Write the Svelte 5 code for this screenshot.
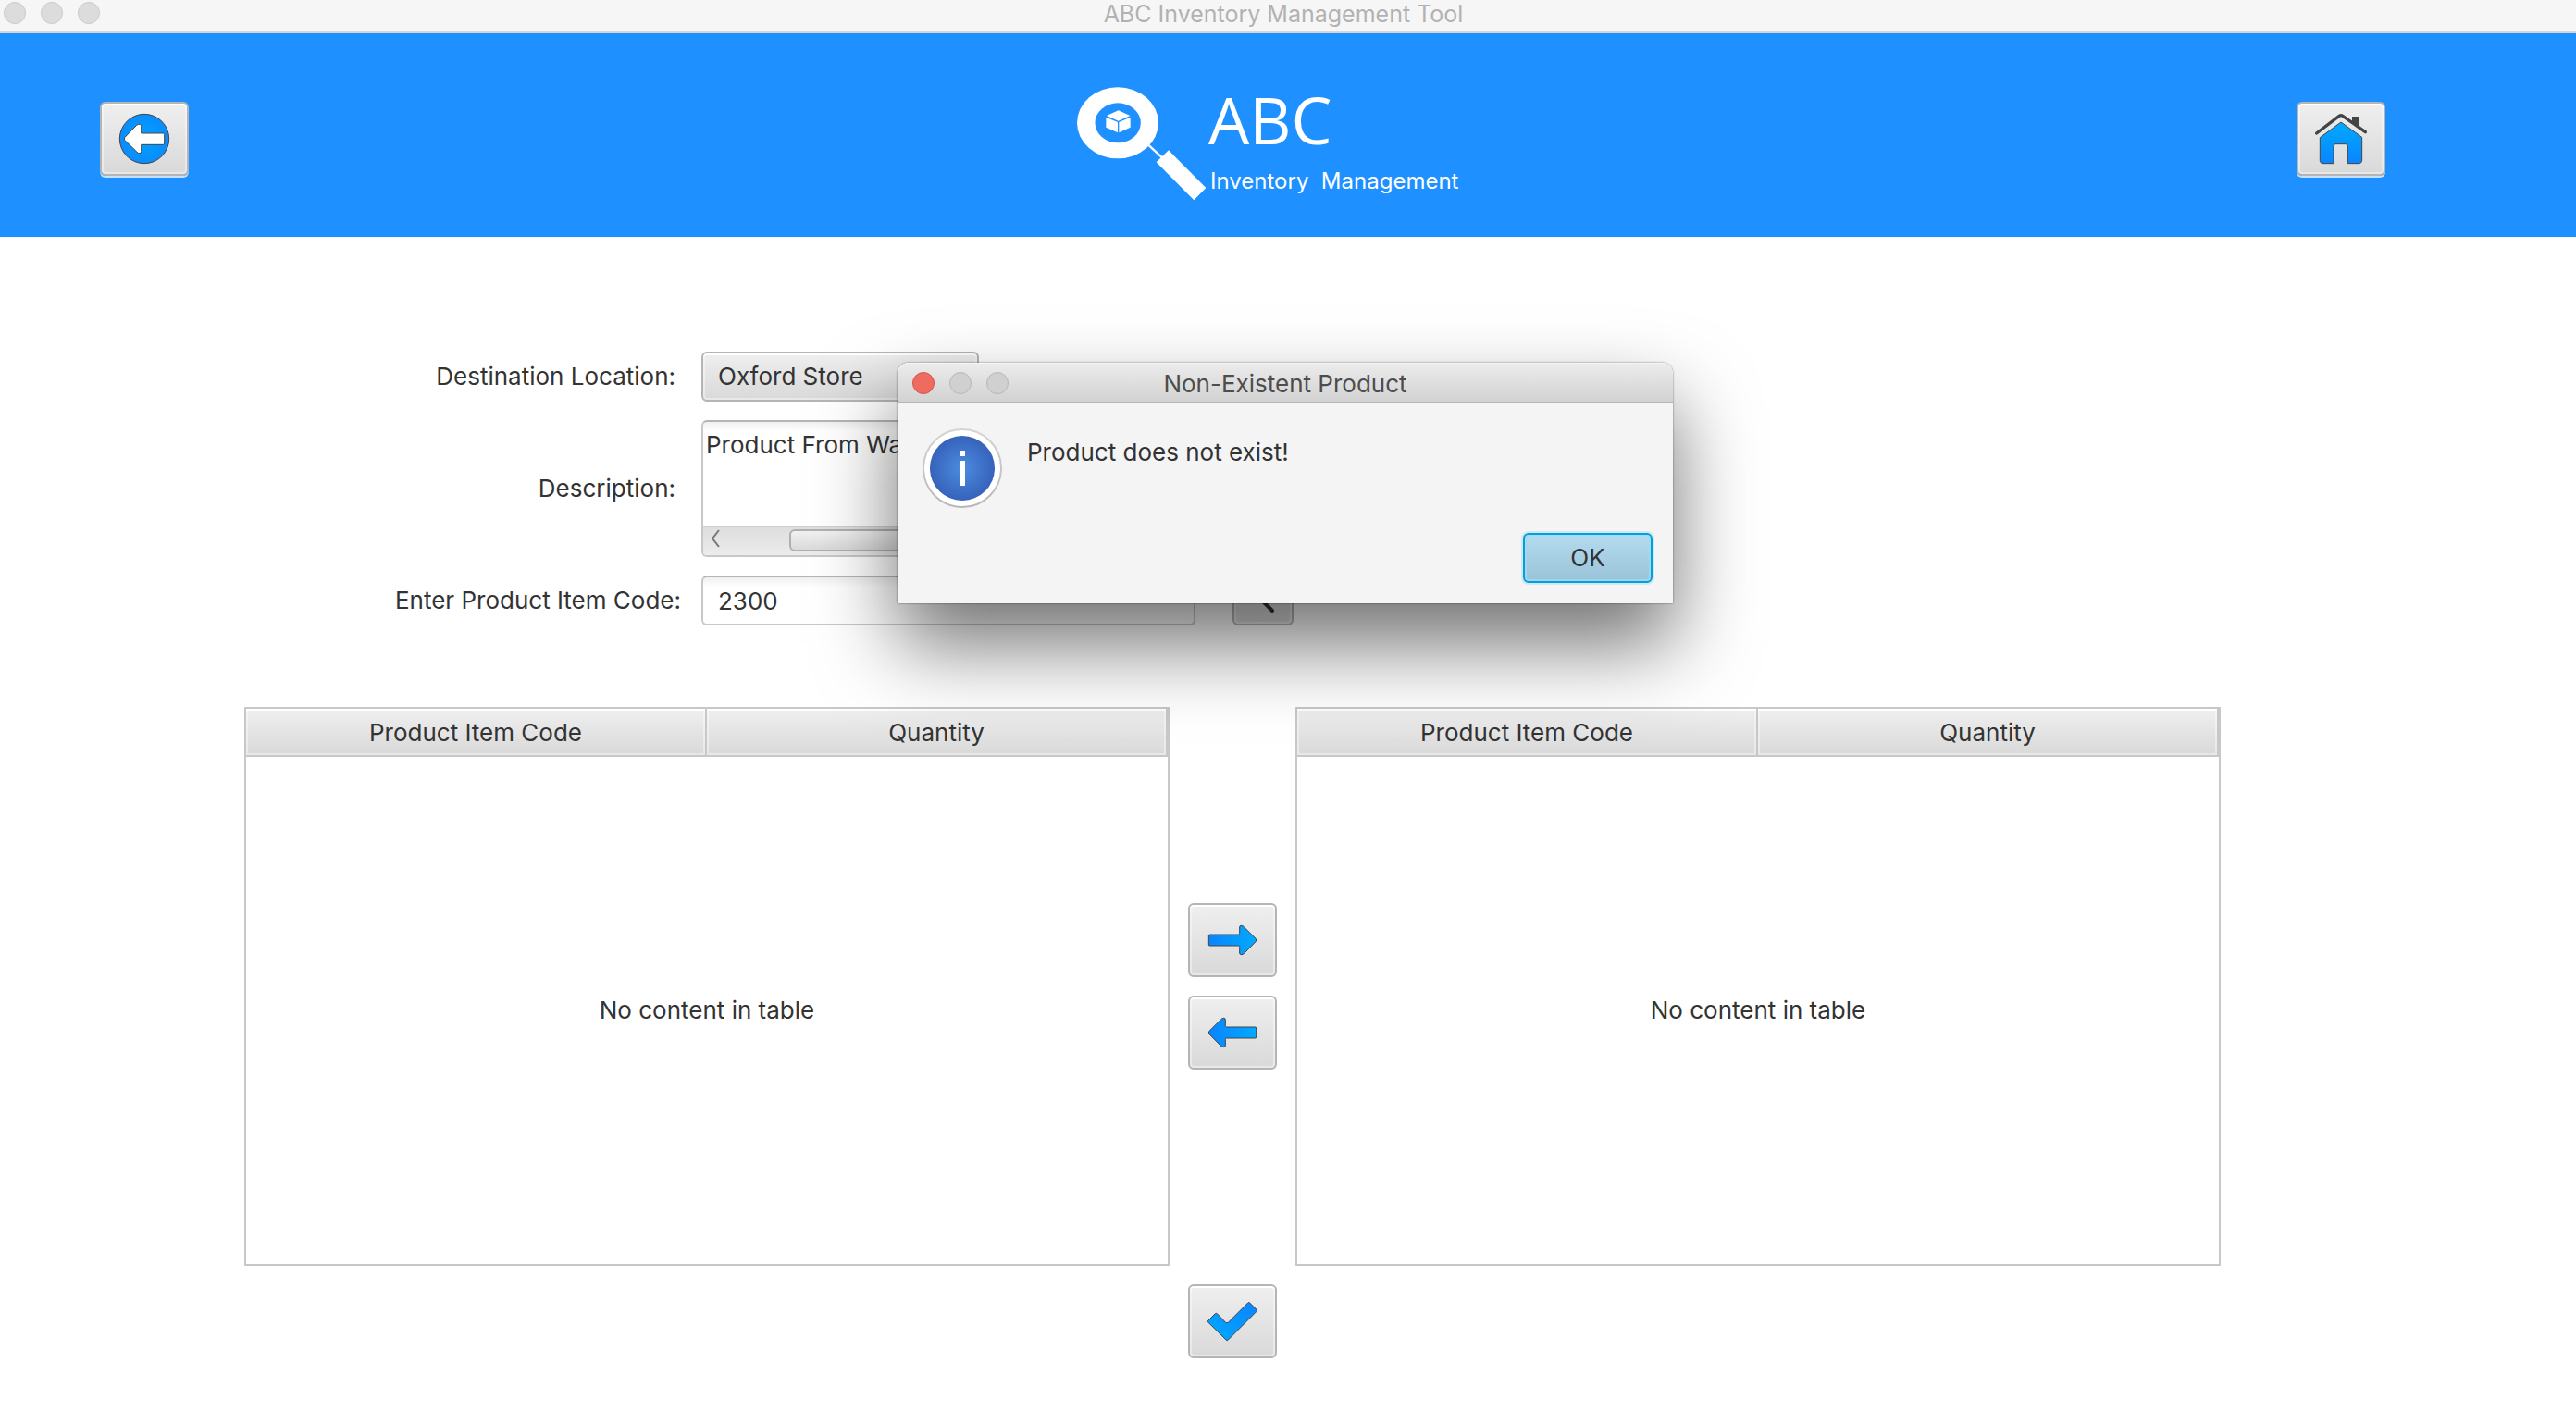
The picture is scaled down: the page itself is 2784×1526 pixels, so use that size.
<script>
  let location = $state('Oxford Store');
  let description = $state('Product From Warehouse');
  let itemCode = $state('2300');
  const tables = ['source', 'selected'];
</script>

{#snippet productTable(name)}
  <table aria-label="{name} products">
    <thead>
      <tr><th scope="col">Product Item Code</th><th scope="col">Quantity</th></tr>
    </thead>
    <tbody>
      <tr><td colspan="2">No content in table</td></tr>
    </tbody>
  </table>
{/snippet}

<div class="window">
  <div class="titlebar">
    <div class="lights"><span></span><span></span><span></span></div>
    <div class="title">ABC Inventory Management Tool</div>
  </div>

  <header>
    <button class="tool on-blue" aria-label="Back">
      <svg width="60" height="60" viewBox="378 360 180 180">
        <defs>
          <radialGradient id="disc"><stop offset="0" stop-color="#00a2ff" /><stop offset="1" stop-color="#0a8cff" /></radialGradient>
        </defs>
        <circle cx="468" cy="450" r="80" fill="url(#disc)" stroke="#444" stroke-width="3" />
        <path d="M404 446 L443 406 Q448 402 454 403 Q458 404 458 409 V432 H529 Q533 432 533 436 V465 Q533 469 529 469 H458 V491 Q458 496 453 497 Q448 497 444 493 L404 454 Q402 450 404 446Z" fill="#fff" stroke="#444" stroke-width="3" />
      </svg>
    </button>

    <div class="logo">
      <svg width="140" height="123" viewBox="72 281 420 369">
        <ellipse cx="204" cy="397.500" rx="132" ry="115.500" fill="#fff" />
        <ellipse cx="204.500" cy="397.500" rx="74" ry="64.500" fill="#1e90ff" />
        <path d="M206 357 L244 374 L206 391 L168 374Z M166 379 L204 395 V429 L166 412Z M208 395 L245 379 V412 L208 429Z" fill="#fff" />
        <path d="M300 466 L348 510" stroke="#fff" stroke-width="7" />
        <path d="M369 486 L490 608 L451 648 L329 525Z" fill="#fff" />
      </svg>
      <div class="wordmark">
        <div class="abc">ABC</div>
        <div class="sub">Inventory&nbsp; Management</div>
      </div>
    </div>

    <button class="tool on-blue" aria-label="Home">
      <svg width="60" height="60" viewBox="180 120 180 180">
        <defs>
          <linearGradient id="house" x1="0" y1="0" x2="0" y2="1"><stop offset="0" stop-color="#00aaff" /><stop offset="1" stop-color="#0a84ff" /></linearGradient>
        </defs>
        <path d="M306 138 H327 V172 L306 158Z" fill="#444" />
        <path d="M191 192 L264 136 Q270 132 276 136 L349 188" fill="none" stroke="#444" stroke-width="10" stroke-linecap="round" />
        <path d="M270 156 L338 205 V281 Q337 289 329 290 H292 V234 Q291 228 285 227 H252 Q247 228 246 234 V290 H210 Q203 289 202 281 V206Z" fill="url(#house)" stroke="#444" stroke-width="3" />
      </svg>
    </button>
  </header>

  <main>
    <form onsubmit={(e) => e.preventDefault()}>
      <label for="location">Destination Location:</label>
      <select id="location" bind:value={location}>
        <option>Oxford Store</option>
      </select>

      <label for="description">Description:</label>
      <div class="area">
        <textarea id="description" wrap="off" bind:value={description}></textarea>
        <div class="scrollbar">
          <svg width="10" height="20" viewBox="0 0 10 20"><path d="M9 1 L2 10 L9 19" fill="none" stroke="#777" stroke-width="2" /></svg>
          <div class="thumb"></div>
        </div>
      </div>

      <label class="wide" for="code">Enter Product Item Code:</label>
      <div class="search">
        <input id="code" type="text" bind:value={itemCode} />
        <button class="find" aria-label="Search">
          <svg width="28" height="28" viewBox="0 0 28 28"><circle cx="9" cy="8" r="6" fill="#0a96ff" stroke="#444" stroke-width="3" /><path d="M14 15 L24 25" stroke="#333" stroke-width="4" stroke-linecap="round" /></svg>
        </button>
      </div>
    </form>

    <section class="transfer">
      {@render productTable(tables[0])}
      <div class="moves">
        <button class="tool" aria-label="Add to list">
          <svg width="60" height="60" viewBox="246 738 180 180">
            <defs>
              <linearGradient id="toRight"><stop offset="0" stop-color="#0a84ff" /><stop offset="1" stop-color="#00aaff" /></linearGradient>
            </defs>
            <path d="M262 810 H355 Q359 810 359 806 V786 Q359 781 364 781 Q369 781 373 785 L411 823 Q415 828 411 833 L374 871 Q370 875 365 875 Q359 875 359 870 V850 Q359 846 355 846 H262 Q259 846 259 843 V813 Q259 810 262 810Z" fill="url(#toRight)" stroke="#444" stroke-width="3" />
          </svg>
        </button>
        <button class="tool" aria-label="Remove from list">
          <svg width="60" height="60" viewBox="246 1038 180 180">
            <defs>
              <linearGradient id="toLeft"><stop offset="0" stop-color="#0a84ff" /><stop offset="1" stop-color="#00aaff" /></linearGradient>
            </defs>
            <path d="M410 1110 H317 Q313 1110 313 1106 V1086 Q313 1081 308 1081 Q303 1081 299 1085 L261 1123 Q257 1128 261 1133 L298 1171 Q302 1175 307 1175 Q313 1175 313 1170 V1150 Q313 1146 317 1146 H410 Q413 1146 413 1143 V1113 Q413 1110 410 1110Z" fill="url(#toLeft)" stroke="#444" stroke-width="3" />
          </svg>
        </button>
      </div>
      {@render productTable(tables[1])}
    </section>

    <div class="confirm">
      <button class="tool" aria-label="Confirm">
        <svg width="60" height="60" viewBox="186 174 180 180">
          <defs>
            <linearGradient id="tick" x1="0" y1="1" x2="1" y2="0"><stop offset="0" stop-color="#00aaff" /><stop offset="1" stop-color="#0a84ff" /></linearGradient>
          </defs>
          <path d="M196 266 Q195 264 197 262 L220 239 Q223 237 226 239 L254 268 Q258 271 262 268 L326 204 Q329 201 332 204 L354 226 Q357 229 354 232 L262 324 Q258 328 255 324Z" fill="url(#tick)" stroke="#444" stroke-width="3" />
        </svg>
      </button>
    </div>
  </main>

  <div class="dialog" role="dialog" aria-labelledby="dialog-title" aria-describedby="dialog-text">
    <div class="dialog-bar">
      <div class="lights"><span class="close"></span><span></span><span></span></div>
      <div class="title" id="dialog-title">Non-Existent Product</div>
    </div>
    <div class="dialog-body">
      <svg width="86" height="86" viewBox="0 0 86 86">
        <defs>
          <radialGradient id="info"><stop offset="0" stop-color="#4a8ddf" /><stop offset="1" stop-color="#3762bb" /></radialGradient>
          <linearGradient id="rim" x1="0" y1="0" x2="0" y2="1"><stop offset="0" stop-color="#d4d4d4" /><stop offset="1" stop-color="#b8b8b8" /></linearGradient>
        </defs>
        <circle cx="43" cy="43" r="42" fill="#fff" stroke="url(#rim)" stroke-width="2" />
        <circle cx="43" cy="43" r="35" fill="url(#info)" />
        <path d="M40 24 H46 V30 H40Z M40 35 H46 V62 H40Z" fill="#fff" />
      </svg>
      <p id="dialog-text">Product does not exist!</p>
    </div>
    <div class="dialog-actions"><button class="ok">OK</button></div>
  </div>
</div>

<style>
  :global(body) {
    margin: 0;
    background: #fff;
  }
  .window {
    position: relative;
    min-height: 100vh;
    overflow: hidden;
    font-family: Inter, 'Liberation Sans', sans-serif;
    font-size: 26px;
    line-height: 32px;
    color: #333;
  }
  button,
  input,
  select,
  textarea {
    box-sizing: border-box;
    margin: 0;
    font: inherit;
    color: inherit;
  }
  svg {
    display: block;
  }

  .titlebar {
    display: grid;
    grid-template-columns: 120px 1fr 130px;
    box-sizing: border-box;
    height: 36px;
    padding-top: 2px;
    background: #f6f6f6;
    border-bottom: 2px solid #d6d6d6;
    color: #b2b2b2;
    font-size: 25px;
  }
  .title {
    line-height: 26px;
    text-align: center;
  }
  .lights {
    display: flex;
    gap: 16px;
    padding-left: 4px;
  }
  .lights span {
    box-sizing: border-box;
    width: 24px;
    height: 24px;
    border: 1px solid #cbcbcb;
    border-radius: 50%;
    background: #dcdcdc;
  }

  header {
    display: flex;
    justify-content: space-between;
    box-sizing: border-box;
    height: 220px;
    padding: 74px 206px 0 108px;
    background: #1e90ff;
  }
  .tool,
  .find {
    display: flex;
    align-items: center;
    justify-content: center;
    width: 96px;
    height: 80px;
    padding: 0;
    border: 2px solid #b5b5b5;
    border-radius: 6px;
    background: linear-gradient(#efefef, #d9d9d9);
    box-shadow:
      inset 0 2px 0 #fff,
      inset 0 0 0 2px rgba(255, 255, 255, 0.4);
  }
  .tool.on-blue {
    box-shadow:
      inset 0 2px 0 #fff,
      inset 0 0 0 2px rgba(255, 255, 255, 0.4),
      0 2px 0 #c4e1ff;
  }
  .logo {
    display: flex;
    align-items: flex-start;
    margin-top: -16px;
    padding-left: 58px;
    color: #fff;
  }
  .wordmark {
    width: 276px;
    white-space: nowrap;
  }
  .abc {
    font-family: 'Open Sans', 'Noto Sans', sans-serif;
    font-size: 70px;
    line-height: 70px;
    padding-left: 2px;
  }
  .sub {
    padding-left: 4px;
    line-height: 64px;
    font-size: 24px;
  }

  main {
    padding: 124px 384px 58px 264px;
  }
  form {
    display: grid;
    grid-template-columns: 494px 534px;
    justify-content: start;
    align-items: center;
    row-gap: 20px;
  }
  label {
    padding-right: 28px;
    text-align: right;
  }
  .wide {
    padding-right: 22px;
  }
  select {
    width: 300px;
    height: 54px;
    padding: 0 16px;
    appearance: none;
    border: 2px solid #b5b5b5;
    border-radius: 6px;
    background: linear-gradient(#efefef, #d9d9d9);
    box-shadow:
      inset 0 2px 0 #fff,
      inset 0 0 0 2px rgba(255, 255, 255, 0.4);
  }
  .area {
    box-sizing: border-box;
    height: 148px;
    border: 2px solid #c8c8c8;
    border-top-color: #b5b5b5;
    border-radius: 6px;
    background: linear-gradient(#f0f0f0, #fff 10px);
    overflow: hidden;
  }
  textarea {
    display: block;
    width: 100%;
    height: 112px;
    padding: 9px 3px;
    border: 0;
    background: none;
    resize: none;
    overflow: hidden;
  }
  .scrollbar {
    display: flex;
    align-items: flex-start;
    box-sizing: border-box;
    height: 32px;
    padding: 2px 0 0 8px;
    border-top: 2px solid #d0d0d0;
    background: linear-gradient(#dedede, #ececec);
  }
  .thumb {
    box-sizing: border-box;
    width: 340px;
    height: 24px;
    margin-left: 75px;
    border: 2px solid #b0b0b0;
    border-radius: 6px;
    background: linear-gradient(#f2f2f2, #dadada);
  }
  .search {
    display: flex;
    gap: 40px;
  }
  input {
    flex: none;
    width: 100%;
    height: 54px;
    padding: 0 16px;
    border: 2px solid #c8c8c8;
    border-top-color: #b5b5b5;
    border-radius: 6px;
    background: linear-gradient(#f0f0f0, #fff 10px);
  }
  .find {
    flex: none;
    width: 66px;
    height: 54px;
  }

  .transfer {
    display: grid;
    grid-template-columns: 1fr 96px 1fr;
    column-gap: 20px;
    margin-top: 88px;
  }
  table {
    width: 100%;
    table-layout: fixed;
    border: 2px solid #c8c8c8;
    border-spacing: 0;
  }
  th {
    height: 48px;
    padding: 2px 0 0;
    border-right: 2px solid #c8c8c8;
    border-bottom: 2px solid #c8c8c8;
    background: linear-gradient(#efefef, #d9d9d9);
    box-shadow:
      inset 0 2px 0 #fff,
      inset 0 0 0 2px rgba(255, 255, 255, 0.4);
    font-weight: 400;
  }
  td {
    height: 548px;
    padding: 0;
    text-align: center;
  }
  .moves {
    display: flex;
    flex-direction: column;
    justify-content: center;
    gap: 20px;
  }
  .confirm {
    display: flex;
    justify-content: center;
    margin-top: 20px;
  }

  .dialog {
    position: absolute;
    top: 392px;
    left: 970px;
    width: 838px;
    background: #f4f4f4;
    border-radius: 12px 12px 0 0;
    box-shadow:
      0 0 2px rgba(0, 0, 0, 0.6),
      0 44px 88px rgba(0, 0, 0, 0.56);
  }
  .dialog-bar {
    display: grid;
    grid-template-columns: 120px 1fr 120px;
    align-items: center;
    box-sizing: border-box;
    height: 44px;
    border-bottom: 2px solid #b4b4b4;
    border-radius: 12px 12px 0 0;
    background: linear-gradient(#ececec, #d2d2d2);
    box-shadow: inset 0 1px 0 #f6f6f6;
    color: #4d4d4d;
  }
  .dialog-bar .title {
    padding-top: 3px;
  }
  .dialog-bar .lights {
    padding: 2px 0 0 16px;
  }
  .dialog-bar .lights span {
    border-color: #b8b8b8;
    background: #d0d0d0;
  }
  .dialog-bar .lights .close {
    border-color: #d9534a;
    background: #ee6b60;
  }
  .dialog-body {
    display: flex;
    align-items: flex-start;
    gap: 27px;
    padding: 27px 27px 0;
  }
  .dialog-body p {
    margin: 10px 0 0;
  }
  .dialog-actions {
    display: flex;
    justify-content: flex-end;
    padding: 27px 22px 22px;
  }
  .ok {
    width: 140px;
    height: 54px;
    padding: 0;
    border: 2px solid #00a0d8;
    border-radius: 6px;
    background: linear-gradient(#b4dcef, #9bc3d8);
    box-shadow:
      inset 0 0 0 2px rgba(160, 220, 245, 0.7),
      0 0 0 2px #d2e8f0;
  }
</style>
